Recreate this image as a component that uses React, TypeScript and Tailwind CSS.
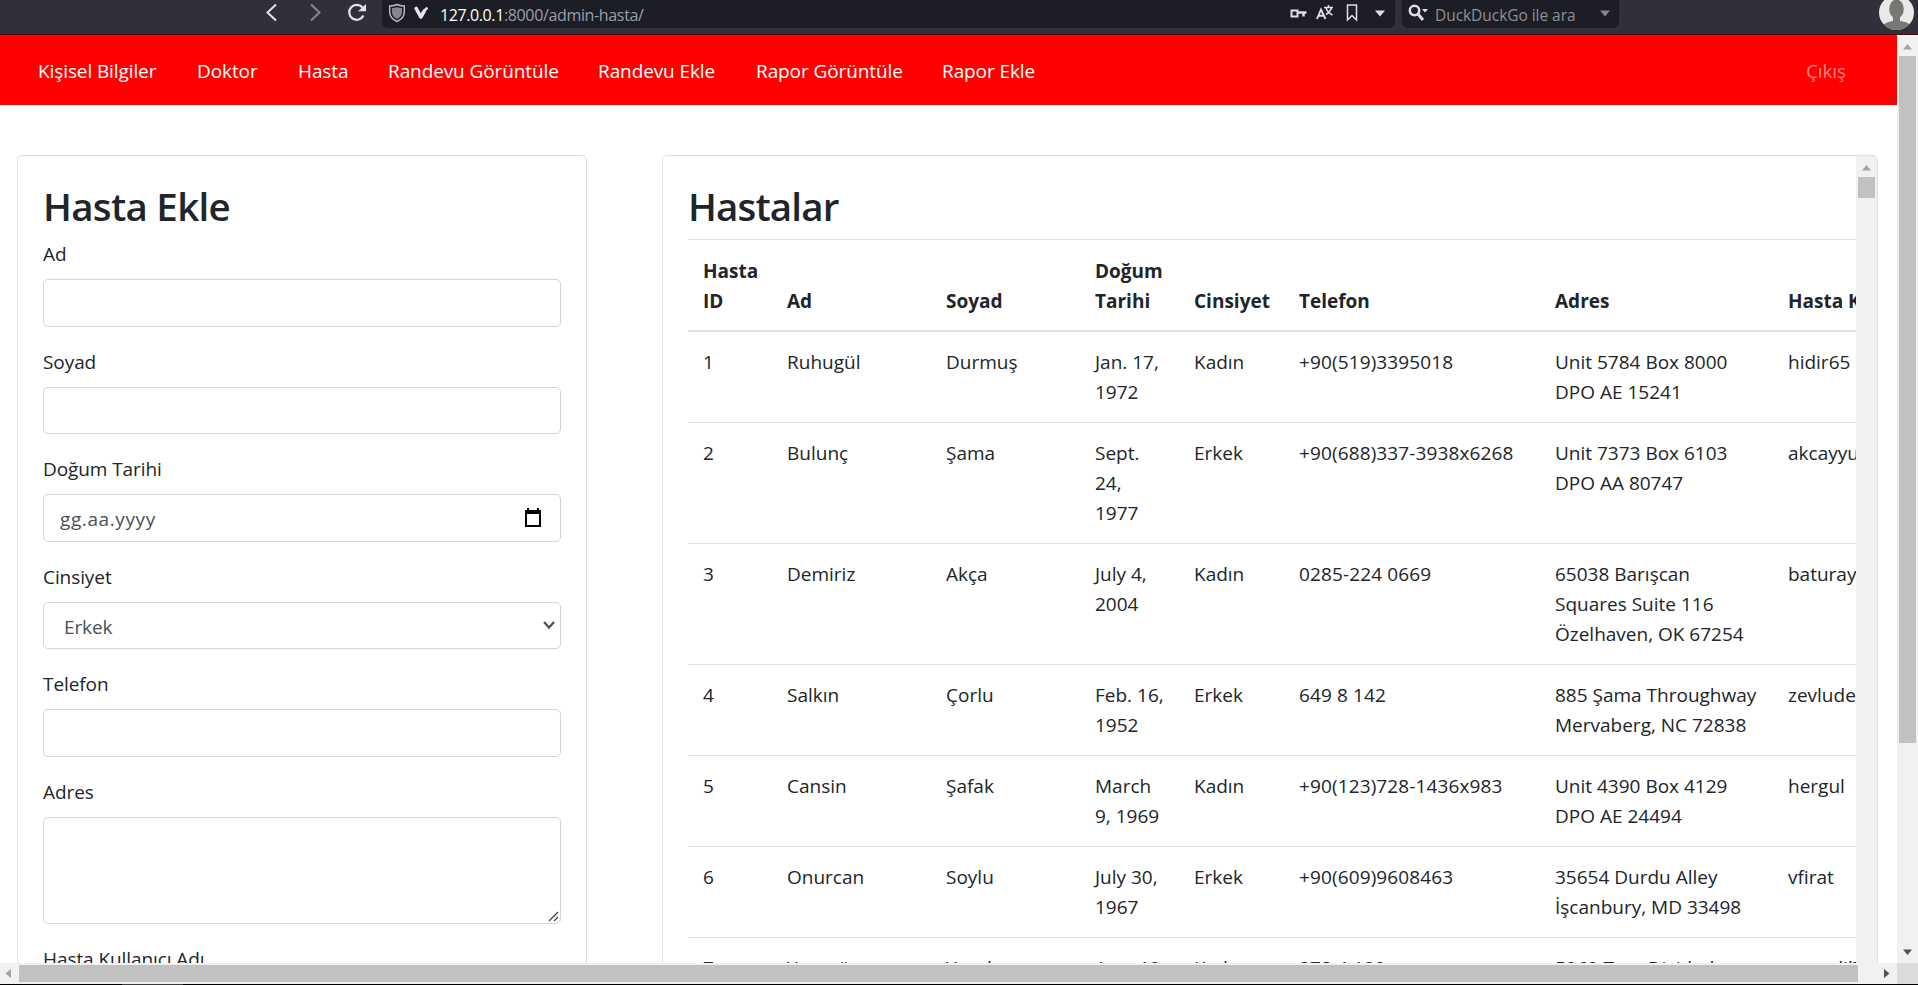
import React from "react";

const NAV = [
  { label: "Kişisel Bilgiler", pos: "w-[159px]" },
  { label: "Doktor", pos: "w-[101px]" },
  { label: "Hasta", pos: "w-[90px]" },
  { label: "Randevu Görüntüle", pos: "w-[210px]" },
  { label: "Randevu Ekle", pos: "w-[158px]" },
  { label: "Rapor Görüntüle", pos: "w-[186px]" },
  { label: "Rapor Ekle", pos: "w-[140px]" },
];

const HEADERS = ["Hasta\nID", "Ad", "Soyad", "Doğum\nTarihi", "Cinsiyet", "Telefon", "Adres", "Hasta Kullanıcı Adı"];

const ROWS = [
  ["1", "Ruhugül", "Durmuş", "Jan. 17,\n1972", "Kadın", "+90(519)3395018", "Unit 5784 Box 8000\nDPO AE 15241", "hidir65"],
  ["2", "Bulunç", "Şama", "Sept.\n24,\n1977", "Erkek", "+90(688)337-3938x6268", "Unit 7373 Box 6103\nDPO AA 80747", "akcayyurt"],
  ["3", "Demiriz", "Akça", "July 4,\n2004", "Kadın", "0285-224 0669", "65038 Barışcan\nSquares Suite 116\nÖzelhaven, OK 67254", "baturayyilmaz"],
  ["4", "Salkın", "Çorlu", "Feb. 16,\n1952", "Erkek", "649 8 142", "885 Şama Throughway\nMervaberg, NC 72838", "zevludergi"],
  ["5", "Cansin", "Şafak", "March\n9, 1969", "Kadın", "+90(123)728-1436x983", "Unit 4390 Box 4129\nDPO AE 24494", "hergul"],
  ["6", "Onurcan", "Soylu", "July 30,\n1967", "Erkek", "+90(609)9608463", "35654 Durdu Alley\nİşcanbury, MD 33498", "vfirat"],
  ["7", "Yasagün", "Yasel", "Aug. 12,\n1980", "Kadın", "378 4 122", "5962 Tara Divided\nNorth, CA 31204", "namalil7"],
];

function Browser() {
  return (
    <div className="flex h-[35px] shrink-0 items-start overflow-hidden border-b border-[#4a0a10] bg-[#2f3039] pl-[262px]">
      <svg className="h-[26px] w-[20px]" viewBox="0 0 20 26" fill="none" stroke="#e4e5ea" strokeWidth="2"><path d="M14 4.500L5.500 12.500L14 20.500" /></svg>
      <svg className="ml-[23px] h-[26px] w-[20px]" viewBox="0 0 20 26" fill="none" stroke="#85868e" strokeWidth="2"><path d="M6 4.500L14.500 12.500L6 20.500" /></svg>
      <svg className="ml-[21px] h-[26px] w-[22px]" viewBox="0 0 22 26" fill="none" stroke="#e4e5ea" strokeWidth="2.200"><path d="M16.500 7.500A7.500 7.500 0 1 0 17.500 15.500" /><path d="M12 11.300H20V4Z" fill="#e4e5ea" stroke="none" /></svg>
      <div className="ml-[14px] flex h-[28px] w-[1013px] items-start rounded-b-md bg-[#1c1d25]">
        <svg className="ml-[6px] h-[26px] w-[18px]" viewBox="0 0 18 26" fill="none"><path d="M9 4.500C11 5.500 13 6 16.300 6V12C16.300 16.500 13.500 19.500 9 21.500C4.500 19.500 1.700 16.500 1.700 12V6C5 6 7 5.500 9 4.500Z" stroke="#b6b7be" strokeWidth="1.500" /><path d="M9 7C10.500 7.800 12 8 14 8.100V12C14 15.500 12 17.500 9 19C6 17.500 4 15.500 4 12V8.100C6 8 7.500 7.800 9 7Z" fill="#85868e" /></svg>
        <svg className="ml-[8px] h-[26px] w-[15px]" viewBox="0 0 15 26" fill="none" stroke="#e4e5ea" strokeLinecap="round"><path d="M2.200 8.500L6.800 17L10 11.500" strokeWidth="3.600" strokeLinejoin="round" /><path d="M10.500 10.500L12.700 8.300" strokeWidth="2.600" /></svg>
        <div className="ml-[11px] flex-1 pt-[2.500px] text-[16px] leading-[25px] text-[#9c9da5]"><span className="tracking-[-0.400px] text-white">127.0.0.1</span><span className="tracking-[-0.350px]">:8000/admin-hasta/</span></div>
        <svg className="mr-[9px] h-[26px] w-[17px]" viewBox="0 0 17 26" fill="none" stroke="#dfe0e6" strokeWidth="2"><path d="M1.500 10.500H7.500V16.500H1.500Z" /><path d="M8 12.500H16.500M13.500 12.500V16.500" strokeWidth="2.500" /></svg>
        <svg className="mr-[13px] h-[26px] w-[17px]" viewBox="0 0 17 26" fill="none" stroke="#dfe0e6"><path d="M1 19L5 9.500L9.500 19M2.500 15.800H8" strokeWidth="1.900" /><path d="M8 7.500H17M12.500 5V7.500M10 8C11 11 13.500 13.500 16.500 15M15.500 8C14.500 11 12.500 13 10 14.500" strokeWidth="1.500" /></svg>
        <svg className="mr-[16px] h-[26px] w-[12px]" viewBox="0 0 12 26" fill="none" stroke="#dfe0e6" strokeWidth="1.500"><path d="M1.500 5H10.500V20L6 15.500L1.500 20Z" /></svg>
        <svg className="mr-[9px] h-[26px] w-[12px]" viewBox="0 0 12 26" fill="#dfe0e6"><path d="M1 10.500H11L6 16.500Z" /></svg>
      </div>
      <div className="ml-[7px] flex h-[28px] w-[217px] items-start rounded-b-md bg-[#1c1d25]">
        <svg className="ml-[6px] h-[26px] w-[21px]" viewBox="0 0 21 26" fill="none" stroke="#dfe0e6" strokeWidth="2.500"><circle cx="6.500" cy="10.500" r="4.700" /><path d="M10 14L15 20" strokeWidth="3" /><path d="M14 9H20L17 12.500Z" fill="#dfe0e6" stroke="none" /></svg>
        <div className="ml-[6px] flex-1 whitespace-nowrap pt-[2.500px] text-[15.500px] leading-[25px] tracking-[-0.050px] text-[#8f9098]">DuckDuckGo ile ara</div>
        <svg className="mr-[8px] h-[26px] w-[12px]" viewBox="0 0 12 26" fill="#85868e"><path d="M1 10.500H11L6 16.500Z" /></svg>
      </div>
      <svg className="ml-[260px] h-[30px] w-[36px]" viewBox="0 0 36 30"><defs><clipPath id="avatar"><circle cx="17.500" cy="12.500" r="17.500" /></clipPath></defs><g clipPath="url(#avatar)"><rect width="36" height="30" fill="#e9e9e7" /><ellipse cx="17.500" cy="9" rx="7.300" ry="9.500" fill="#787774" /><path d="M14 16H21V21C26 22 30 22.500 32 26V30H3V26C6 22.500 10 22 14 21Z" fill="#787774" /></g></svg>
    </div>
  );
}

function Field({ label, children }: { label: string; children: React.ReactNode }) {
  return (
    <div className="mb-[20px]">
      <div className="mb-[10px] h-[30px] leading-[30px] tracking-[-0.080px]">{label}</div>
      {children}
    </div>
  );
}

const BOX = "flex h-[47.5px] items-center rounded-[5px] border border-[#ced4da] text-[#495057]";

function Arrow({ d, color }: { d: string; color: string }) {
  return <svg className="h-[21px] w-[21px] shrink-0" viewBox="0 0 21 21" fill={color}><path d={d} /></svg>;
}

function PatientForm() {
  return (
    <section className="h-[1200px] w-[570px] shrink-0 rounded-[5px] border border-[#dfdfdf] p-[25px]">
      <h2 className="mb-[10px] h-[48px] text-[38.500px] font-semibold leading-[50px] tracking-[-0.700px]">Hasta Ekle</h2>
      <Field label="Ad"><div className={BOX} /></Field>
      <Field label="Soyad"><div className={BOX} /></Field>
      <Field label="Doğum Tarihi">
        <div className={BOX}>
          <span className="ml-[16px] flex-1 pt-[3px] tracking-[0.600px]">gg.aa.yyyy</span>
          <svg className="mr-[18px] h-[20px] w-[18px]" viewBox="0 0 18 20"><path d="M3 0H5V2H13V0H15V2H17V19H1V2H3ZM3 6V17H15V6Z" fill="#000" fillRule="evenodd" /></svg>
        </div>
      </Field>
      <Field label="Cinsiyet">
        <div className={BOX}>
          <span className="ml-[20px] flex-1 pt-[3px] tracking-[-0.100px]">Erkek</span>
          <svg className="mr-[5px] h-[10px] w-[12px]" viewBox="0 0 12 10" fill="none" stroke="#495057" strokeWidth="2.200"><path d="M1 2L6 7.500L11 2" /></svg>
        </div>
      </Field>
      <Field label="Telefon"><div className={BOX} /></Field>
      <Field label="Adres">
        <div className="flex h-[107.5px] items-end justify-end rounded-[5px] border border-[#ced4da]">
          <svg className="mb-[1px] mr-[1px] h-[11px] w-[11px]" viewBox="0 0 11 11" stroke="#444" strokeWidth="1.300"><path d="M1 10L10 1M6 10L10 6" /></svg>
        </div>
      </Field>
      <Field label="Hasta Kullanıcı Adı"><div className={BOX} /></Field>
    </section>
  );
}

function PatientTable() {
  return (
    <section className="flex h-[1200px] w-[1216px] shrink-0 overflow-hidden rounded-[5px] border border-[#dfdfdf]">
      <div className="flex-1 overflow-hidden pl-[25px] pt-[25px]">
        <h2 className="mb-[10px] h-[48px] text-[38.500px] font-semibold leading-[50px] tracking-[-0.850px]">Hastalar</h2>
        <table className="w-[1400px] table-fixed border-separate border-spacing-0">
          <colgroup>
            <col className="w-[84px]" />
            <col className="w-[159px]" />
            <col className="w-[149px]" />
            <col className="w-[99px]" />
            <col className="w-[105px]" />
            <col className="w-[256px]" />
            <col className="w-[233px]" />
            <col />
          </colgroup>
          <thead>
            <tr>
              {HEADERS.map((h) => (
                <th key={h} className="h-[93px] whitespace-pre border-b-2 border-t border-[#dee2e6] px-[15px] py-0 pb-[14px] text-left align-bottom font-bold leading-[30px]">{h}</th>
              ))}
            </tr>
          </thead>
          <tbody>
            {ROWS.map((r) => (
              <tr key={r[0]}>
                {r.map((c, i) => (
                  <td key={i} className={"whitespace-pre border-b border-[#dee2e6] px-[15px] py-[15px] align-top leading-[30px] " + (i === 5 ? "tracking-[0.120px]" : "")}>{c}</td>
                ))}
              </tr>
            ))}
          </tbody>
        </table>
      </div>
      <div className="flex w-[21px] shrink-0 flex-col items-center bg-[#f1f1f1]">
        <Arrow d="M6 14.500H15L10.500 9Z" color="#a3a3a3" />
        <div className="h-[21px] w-[17px] bg-[#c1c1c1]" />
      </div>
    </section>
  );
}

export default function App() {
  return (
    <div className="flex h-[985px] w-[1918px] flex-col overflow-hidden bg-white font-['Open_Sans','Noto_Sans',sans-serif] text-[19px] text-[#212529]">
      <Browser />
      <div className="flex h-[928px] shrink-0">
        <main className="w-[1897px] shrink-0 overflow-hidden">
          <nav className="flex h-[70px] items-center bg-[#ff0000] pl-[38px] pr-[51px] pt-[2px] tracking-[-0.100px] text-white">
            {NAV.map((n) => (
              <a key={n.label} className={n.pos + " shrink-0 whitespace-nowrap"}>{n.label}</a>
            ))}
            <a className="ml-auto text-[#ff8080]">Çıkış</a>
          </nav>
          <div className="flex pl-[17px] pt-[50px]">
            <PatientForm />
            <div className="w-[75px] shrink-0" />
            <PatientTable />
          </div>
        </main>
        <div className="flex w-[21px] shrink-0 flex-col items-center bg-[#f1f1f1]">
          <Arrow d="M6 14.500H15L10.500 9Z" color="#a3a3a3" />
          <div className="h-[687px] w-[17px] bg-[#c1c1c1]" />
          <div className="flex-1" />
          <Arrow d="M6 7.500H15L10.500 13Z" color="#505050" />
        </div>
      </div>
      <div className="flex h-[21px] shrink-0 items-center bg-[#f1f1f1]">
        <div className="flex w-[19px] shrink-0"><Arrow d="M11 6V15L5.500 10.500Z" color="#a3a3a3" /></div>
        <div className="h-[17px] w-[1839px] bg-[#c1c1c1]" />
        <div className="flex-1" />
        <Arrow d="M8 6V15L13.500 10.500Z" color="#505050" />
        <div className="h-[21px] w-[21px] bg-[#dcdcdc]" />
      </div>
      <div className="flex h-[1px] bg-black"><div className="ml-[122px] h-[1px] w-[61px] bg-[#3a3a3a]" /></div>
    </div>
  );
}
